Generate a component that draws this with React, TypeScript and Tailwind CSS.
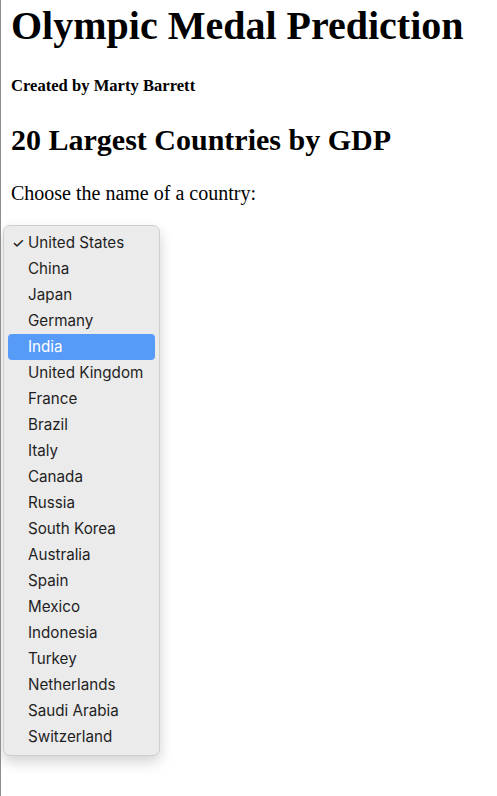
import React from "react";

const countries = [
  "United States",
  "China",
  "Japan",
  "Germany",
  "India",
  "United Kingdom",
  "France",
  "Brazil",
  "Italy",
  "Canada",
  "Russia",
  "South Korea",
  "Australia",
  "Spain",
  "Mexico",
  "Indonesia",
  "Turkey",
  "Netherlands",
  "Saudi Arabia",
  "Switzerland",
];

export default function App() {
  return (
    <div className="min-h-[796px] w-[497px] overflow-hidden bg-white border-l border-[#8e8e8e] pl-[10px] text-black font-['Liberation_Serif',_'Times_New_Roman',_serif]">
      <h1 className="mt-[2.5px] text-[40px] font-bold leading-[46px] whitespace-nowrap">
        Olympic Medal Prediction
      </h1>
      <h5 className="mt-[27.7px] text-[16.6px] font-bold leading-[19.1px]">
        Created by Marty Barrett
      </h5>
      <h2 className="mt-[27.7px] text-[30px] font-bold leading-[34.5px]">
        20 Largest Countries by GDP
      </h2>
      <p className="mt-[24.9px] text-[20px] leading-[23px]">Choose the name of a country:</p>
      <div className="relative mt-[19.6px] h-[24px]">
        <div className="absolute left-[-8px] top-0 w-[157px] rounded-[7px] border border-[#cfcfcf] bg-[#ebebeb] pt-[4px] pb-[5px] shadow-[0_6px_14px_rgba(0,0,0,0.18)] font-['Inter',_'Liberation_Sans',_sans-serif] text-[15.2px] text-[#1f1f1f]">
          {countries.map((c, i) => (
            <div
              key={c}
              className={
                i === 4
                  ? "relative mx-[4px] h-[26px] rounded-[4px] bg-[#579bf9] pl-[20px] leading-[26px] text-white"
                  : "relative mx-[4px] h-[26px] rounded-[4px] pl-[20px] leading-[26px]"
              }
            >
              {i === 0 && (
                <span className="absolute left-[4px] top-0 text-[14px] font-medium leading-[26px]">✓</span>
              )}
              {c}
            </div>
          ))}
        </div>
      </div>
    </div>
  );
}
